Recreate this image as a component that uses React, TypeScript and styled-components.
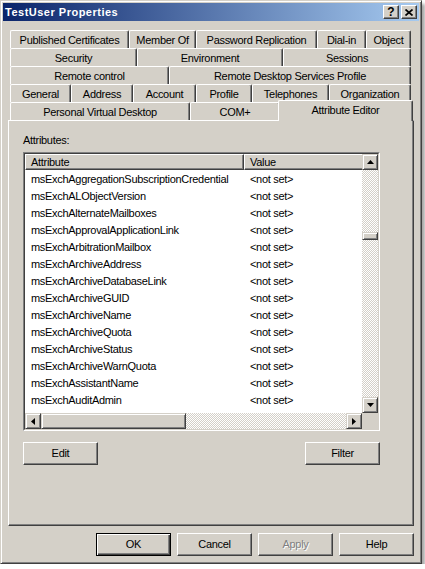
import React from "react";
import styled, { createGlobalStyle } from "styled-components";

const FACE = "#d4d0c8";
const SHADOW = "#808080";
const DARK = "#404040";
const FONT = `"Liberation Sans", Arial, sans-serif`;

const Global = createGlobalStyle`
  html, body { margin: 0; padding: 0; background: #ffffff; }
  body { font-family: ${FONT}; font-size: 11px; letter-spacing: -0.3px; color: #000; }
  * { box-sizing: border-box; }
`;

const Window = styled.div`
  width: 422px;
  height: 564px;
  background: ${FACE};
  border: 1px solid;
  border-color: ${FACE} ${DARK} ${DARK} ${FACE};
  box-shadow: inset 1px 1px #fff, inset -1px -1px ${SHADOW}, 3px 4px 3px rgba(0, 0, 0, 0.35);
  padding: 2px;
  display: flex;
  flex-direction: column;
`;

const TitleBar = styled.div`
  height: 18px;
  flex: none;
  display: flex;
  align-items: center;
  padding: 0 2px;
  background: linear-gradient(to right, #0a246a, #a6caf0);
`;

const TitleText = styled.span`
  color: #fff;
  font-weight: bold;
  font-size: 11px;
  letter-spacing: 0.5px;
  line-height: 18px;
  white-space: nowrap;
`;

const CaptionButtons = styled.div`
  margin-left: auto;
  display: flex;
  gap: 2px;
`;

const CaptionButton = styled.div`
  width: 16px;
  height: 14px;
  background: ${FACE};
  border: 1px solid;
  border-color: #fff ${DARK} ${DARK} #fff;
  box-shadow: inset -1px -1px ${SHADOW};
  display: flex;
  align-items: center;
  justify-content: center;
  font-weight: bold;
  font-size: 12px;
  letter-spacing: 0;
  line-height: 12px;
  color: #000;
`;

const Body = styled.div`
  flex: 1;
  display: flex;
  flex-direction: column;
  padding: 9px 5px 0 5px;
`;

const TabStrip = styled.div`
  margin-left: 2px;
  width: 401px;
  display: flex;
  flex-direction: column;
`;

const TabRow = styled.div`
  display: flex;
  height: 18px;
  align-items: flex-end;
`;

const Tab = styled.div<{ $w: number; $active?: boolean }>`
  flex: none;
  width: ${(p) => (p.$active ? p.$w + 4 : p.$w)}px;
  height: ${(p) => (p.$active ? 21 : 18)}px;
  margin: ${(p) => (p.$active ? "0 -2px -1px -2px" : "0")};
  position: ${(p) => (p.$active ? "relative" : "static")};
  z-index: ${(p) => (p.$active ? 2 : "auto")};
  background: ${FACE};
  border-top: 1px solid #fff;
  border-left: 1px solid #fff;
  border-right: 1px solid ${DARK};
  box-shadow: inset -1px 0 ${SHADOW};
  border-radius: 2px 2px 0 0;
  text-align: center;
  padding-top: 1px;
  line-height: ${(p) => (p.$active ? 17 : 16)}px;
  white-space: nowrap;
  overflow: hidden;
`;

const Panel = styled.div`
  width: 406px;
  height: 406px;
  flex: none;
  background: ${FACE};
  border: 1px solid;
  border-color: #fff ${DARK} ${DARK} #fff;
  box-shadow: inset -1px -1px ${SHADOW};
  padding: 13px 0 0 14px;
  display: flex;
  flex-direction: column;
`;

const Label = styled.div`
  line-height: 13px;
  height: 13px;
`;

const ListOuter = styled.div`
  margin-top: 5px;
  width: 357px;
  height: 279px;
  border: 1px solid;
  border-color: ${SHADOW} #fff #fff ${SHADOW};
`;

const ListInner = styled.div`
  width: 100%;
  height: 100%;
  border: 1px solid;
  border-color: ${DARK} ${FACE} ${FACE} ${DARK};
  background: #fff;
  display: grid;
  grid-template-columns: 337px 16px;
  grid-template-rows: 259px 16px;
`;

const ListContent = styled.div`
  overflow: hidden;
  display: flex;
  flex-direction: column;
`;

const Header = styled.div`
  display: flex;
  height: 16px;
  flex: none;
`;

const HeaderCell = styled.div<{ $w: number }>`
  flex: none;
  width: ${(p) => p.$w}px;
  height: 16px;
  background: ${FACE};
  border-top: 1px solid #fff;
  border-left: 1px solid #fff;
  border-right: 1px solid ${DARK};
  border-bottom: 1px solid ${DARK};
  box-shadow: inset -1px -1px ${SHADOW};
  padding: 1px 0 0 5px;
  line-height: 13px;
  white-space: nowrap;
`;

const Row = styled.div`
  display: flex;
  height: 17px;
  flex: none;
`;

const Cell = styled.div<{ $w: number }>`
  flex: none;
  width: ${(p) => p.$w}px;
  padding: 2px 0 0 6px;
  line-height: 15px;
  white-space: nowrap;
  overflow: hidden;
`;

const checker = `repeating-conic-gradient(${FACE} 0% 25%, #ffffff 0% 50%) 0 0 / 2px 2px`;

const VScroll = styled.div`
  display: flex;
  flex-direction: column;
`;

const HScroll = styled.div`
  display: flex;
`;

const Track = styled.div`
  flex: 1;
  background: ${checker};
  display: flex;
`;

const VTrack = styled(Track)`
  flex-direction: column;
`;

const raised = `
  background: ${FACE};
  border: 1px solid;
  border-color: ${FACE} ${DARK} ${DARK} ${FACE};
  box-shadow: inset 1px 1px #fff, inset -1px -1px ${SHADOW};
`;

const ArrowButton = styled.div`
  ${raised}
  width: 16px;
  height: 16px;
  flex: none;
  display: flex;
  align-items: center;
  justify-content: center;
`;

const VThumb = styled.div<{ $offset: number; $size: number }>`
  ${raised}
  margin-top: ${(p) => p.$offset}px;
  height: ${(p) => p.$size}px;
  width: 16px;
  flex: none;
`;

const HThumb = styled.div<{ $size: number }>`
  ${raised}
  width: ${(p) => p.$size}px;
  height: 16px;
  flex: none;
`;

const Corner = styled.div`
  background: ${FACE};
`;

const ActionRow = styled.div`
  width: 357px;
  margin-top: 11px;
  display: flex;
  justify-content: space-between;
`;

const Button = styled.button<{ $default?: boolean }>`
  width: 75px;
  height: 23px;
  padding: 0;
  margin: 0;
  font: inherit;
  letter-spacing: inherit;
  color: ${(p) => (p.disabled ? SHADOW : "#000")};
  text-shadow: ${(p) => (p.disabled ? "1px 1px #fff" : "none")};
  background: ${FACE};
  border: 1px solid;
  border-color: ${(p) => (p.$default ? "#000" : `#fff ${DARK} ${DARK} #fff`)};
  box-shadow: ${(p) =>
    p.$default
      ? `inset 1px 1px #fff, inset -1px -1px ${DARK}, inset -2px -2px ${SHADOW}`
      : `inset -1px -1px ${SHADOW}`};
  line-height: 21px;
  text-align: center;
  cursor: default;
`;

const DialogButtons = styled.div`
  margin-top: 7px;
  display: flex;
  justify-content: flex-end;
  gap: 6px;
`;

const Arrow = ({ dir }: { dir: "up" | "down" | "left" | "right" }) => {
  const vertical = dir === "up" || dir === "down";
  const w = vertical ? 7 : 4;
  const h = vertical ? 4 : 7;
  const pts =
    dir === "up"
      ? "0,4 7,4 3.5,0"
      : dir === "down"
      ? "0,0 7,0 3.5,4"
      : dir === "left"
      ? "4,0 4,7 0,3.5"
      : "0,0 0,7 4,3.5";
  return (
    <svg width={w} height={h} viewBox={`0 0 ${w} ${h}`}>
      <polygon points={pts} fill="#000" />
    </svg>
  );
};

const CloseGlyph = () => (
  <svg width="8" height="7" viewBox="0 0 8 7">
    <path d="M0.5 0.5 L7.5 6.5 M7.5 0.5 L0.5 6.5" stroke="#000" strokeWidth="1.7" fill="none" />
  </svg>
);

type TabDef = { label: string; w: number; active?: boolean };

const tabRows: TabDef[][] = [
  [
    { label: "Published Certificates", w: 119 },
    { label: "Member Of", w: 67 },
    { label: "Password Replication", w: 121 },
    { label: "Dial-in", w: 49 },
    { label: "Object", w: 45 },
  ],
  [
    { label: "Security", w: 127 },
    { label: "Environment", w: 146 },
    { label: "Sessions", w: 128 },
  ],
  [
    { label: "Remote control", w: 159 },
    { label: "Remote Desktop Services Profile", w: 242 },
  ],
  [
    { label: "General", w: 61 },
    { label: "Address", w: 62 },
    { label: "Account", w: 63 },
    { label: "Profile", w: 56 },
    { label: "Telephones", w: 77 },
    { label: "Organization", w: 82 },
  ],
  [
    { label: "Personal Virtual Desktop", w: 180 },
    { label: "COM+", w: 90 },
    { label: "Attribute Editor", w: 131, active: true },
  ],
];

const attributes = [
  "msExchAggregationSubscriptionCredential",
  "msExchALObjectVersion",
  "msExchAlternateMailboxes",
  "msExchApprovalApplicationLink",
  "msExchArbitrationMailbox",
  "msExchArchiveAddress",
  "msExchArchiveDatabaseLink",
  "msExchArchiveGUID",
  "msExchArchiveName",
  "msExchArchiveQuota",
  "msExchArchiveStatus",
  "msExchArchiveWarnQuota",
  "msExchAssistantName",
  "msExchAuditAdmin",
  "msExchAuditDelegate",
];

export default function App() {
  return (
    <>
      <Global />
      <Window>
        <TitleBar>
          <TitleText>TestUser Properties</TitleText>
          <CaptionButtons>
            <CaptionButton>?</CaptionButton>
            <CaptionButton>
              <CloseGlyph />
            </CaptionButton>
          </CaptionButtons>
        </TitleBar>
        <Body>
          <TabStrip>
            {tabRows.map((row, i) => (
              <TabRow key={i}>
                {row.map((t) => (
                  <Tab key={t.label} $w={t.w} $active={t.active}>
                    {t.label}
                  </Tab>
                ))}
              </TabRow>
            ))}
          </TabStrip>
          <Panel>
            <Label>Attributes:</Label>
            <ListOuter>
              <ListInner>
                <ListContent>
                  <Header>
                    <HeaderCell $w={219}>Attribute</HeaderCell>
                    <HeaderCell $w={160}>Value</HeaderCell>
                  </Header>
                  {attributes.map((a) => (
                    <Row key={a}>
                      <Cell $w={219}>{a}</Cell>
                      <Cell $w={160}>&lt;not set&gt;</Cell>
                    </Row>
                  ))}
                </ListContent>
                <VScroll>
                  <ArrowButton>
                    <Arrow dir="up" />
                  </ArrowButton>
                  <VTrack>
                    <VThumb $offset={62} $size={8} />
                  </VTrack>
                  <ArrowButton>
                    <Arrow dir="down" />
                  </ArrowButton>
                </VScroll>
                <HScroll>
                  <ArrowButton>
                    <Arrow dir="left" />
                  </ArrowButton>
                  <Track>
                    <HThumb $size={145} />
                  </Track>
                  <ArrowButton>
                    <Arrow dir="right" />
                  </ArrowButton>
                </HScroll>
                <Corner />
              </ListInner>
            </ListOuter>
            <ActionRow>
              <Button>Edit</Button>
              <Button>Filter</Button>
            </ActionRow>
          </Panel>
          <DialogButtons>
            <Button $default>OK</Button>
            <Button>Cancel</Button>
            <Button disabled>Apply</Button>
            <Button>Help</Button>
          </DialogButtons>
        </Body>
      </Window>
    </>
  );
}
